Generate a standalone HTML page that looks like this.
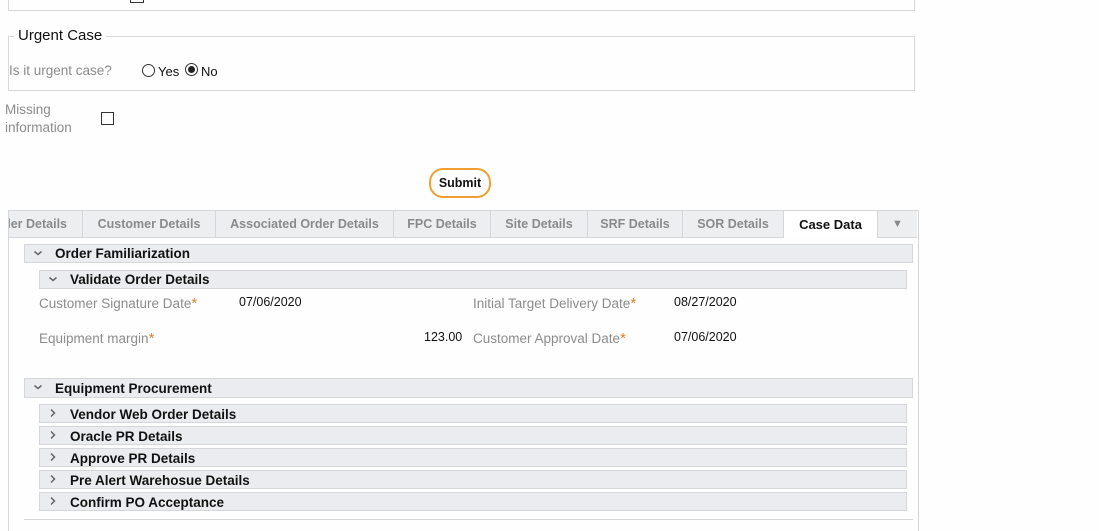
<!DOCTYPE html>
<html><head><style>
body{margin:0;width:1099px;height:521px;background:#fefefe;font-family:"Liberation Sans",sans-serif;position:relative;overflow:hidden;font-size:13px;color:#111}
.a{position:absolute;white-space:nowrap}
.hdr{position:absolute;background:#eaecef;border:1px solid #d4d6d9;font-weight:bold;font-size:13.5px;line-height:17px;box-sizing:border-box;color:#111}
.hdr svg{position:absolute;left:8px;top:4px}
.hdr span{position:absolute;left:30px;top:0;white-space:nowrap}
.lbl{position:absolute;color:#8c8c8c;font-size:13.5px;white-space:nowrap}
.st{color:#d9822b;font-size:15px}
.tab{position:absolute;top:211px;height:27px;line-height:27px;text-align:center;font-weight:bold;color:#8a8a8a;font-size:12.5px;background:#eceef0;border-right:1px solid #d4d6d9;box-sizing:border-box;white-space:nowrap;overflow:hidden}
</style></head><body>
<div class="a" style="left:8px;top:-2px;width:905px;height:12px;border:1px solid #d8d8d8;border-top:none"></div>
<div class="a" style="left:130px;top:-4px;width:12px;height:5px;border:1px solid #333"></div>
<div class="a" style="left:8px;top:36px;width:905px;height:53px;border:1px solid #d8d8d8"></div>
<div class="a" style="left:14px;top:27px;background:#fefefe;padding:0 4px;font-size:15px;color:#111">Urgent Case</div>
<div class="lbl" style="left:9px;top:63px">Is it urgent case?</div>
<div class="a" style="left:142px;top:64px;width:11px;height:11px;border:1px solid #333;border-radius:50%"></div>
<div class="a" style="left:158px;top:64px;font-size:13px">Yes</div>
<div class="a" style="left:185px;top:63px;width:11px;height:11px;border:1px solid #333;border-radius:50%"></div>
<div class="a" style="left:188px;top:66px;width:7px;height:7px;background:#222;border-radius:50%"></div>
<div class="a" style="left:201px;top:64px;font-size:13px">No</div>
<div class="lbl" style="left:5px;top:101px;line-height:18px">Missing<br>information</div>
<div class="a" style="left:101px;top:112px;width:11px;height:11px;border:1px solid #333"></div>
<div class="a" style="left:429px;top:168px;width:58px;height:26px;border:2px solid #f0a030;border-radius:14px;text-align:center;line-height:26px;font-weight:bold;font-size:12.5px">Submit</div>

<div class="a" style="left:8px;top:210px;width:909px;height:320px;border:1px solid #d4d6d9;border-bottom:none"></div>
<div class="tab" style="left:9px;width:74px;text-align:right;padding-right:15px;direction:rtl">ler Details</div>
<div class="tab" style="left:83px;width:133px">Customer Details</div>
<div class="tab" style="left:216px;width:178px">Associated Order Details</div>
<div class="tab" style="left:394px;width:97px">FPC Details</div>
<div class="tab" style="left:491px;width:97px">Site Details</div>
<div class="tab" style="left:588px;width:95px">SRF Details</div>
<div class="tab" style="left:683px;width:101px">SOR Details</div>
<div class="tab" style="left:784px;width:94px;background:#fff;color:#111;font-size:13px">Case Data</div>
<div class="tab" style="left:878px;width:39px;border-right:none;color:#888;font-size:11px">▼</div>
<div class="a" style="left:8px;top:237px;width:776px;height:1px;background:#d4d6d9"></div>
<div class="a" style="left:878px;top:237px;width:39px;height:1px;background:#d4d6d9"></div>

<div class="hdr" style="left:24px;top:244px;width:889px;height:19px"><svg width="10" height="8"><path d="M1.5 2.5L5 5.5L8.5 2.5" fill="none" stroke="#666" stroke-width="1.5"/></svg><span>Order Familiarization</span></div>
<div class="hdr" style="left:39px;top:270px;width:868px;height:19px"><svg width="10" height="8"><path d="M1.5 2.5L5 5.5L8.5 2.5" fill="none" stroke="#666" stroke-width="1.5"/></svg><span>Validate Order Details</span></div>
<div class="lbl" style="left:39px;top:295px">Customer Signature Date<span class="st">*</span></div>
<div class="a" style="left:239px;top:295px;font-size:12.5px">07/06/2020</div>
<div class="lbl" style="left:473px;top:295px">Initial Target Delivery Date<span class="st">*</span></div>
<div class="a" style="left:674px;top:295px;font-size:12.5px">08/27/2020</div>
<div class="lbl" style="left:39px;top:330px">Equipment margin<span class="st">*</span></div>
<div class="a" style="left:424px;top:330px;font-size:12.5px">123.00</div>
<div class="lbl" style="left:473px;top:330px">Customer Approval Date<span class="st">*</span></div>
<div class="a" style="left:674px;top:330px;font-size:12.5px">07/06/2020</div>

<div class="hdr" style="left:24px;top:378px;width:889px;height:20px"><svg width="10" height="8"><path d="M1.5 2.5L5 5.5L8.5 2.5" fill="none" stroke="#666" stroke-width="1.5"/></svg><span style="top:1px">Equipment Procurement</span></div>
<div class="hdr" style="left:39px;top:404px;width:868px;height:19px"><svg width="10" height="10" style="top:3px"><path d="M3 1.5L6.5 5L3 8.5" fill="none" stroke="#666" stroke-width="1.5"/></svg><span style="top:1px">Vendor Web Order Details</span></div>
<div class="hdr" style="left:39px;top:426px;width:868px;height:19px"><svg width="10" height="10" style="top:3px"><path d="M3 1.5L6.5 5L3 8.5" fill="none" stroke="#666" stroke-width="1.5"/></svg><span style="top:1px">Oracle PR Details</span></div>
<div class="hdr" style="left:39px;top:448px;width:868px;height:19px"><svg width="10" height="10" style="top:3px"><path d="M3 1.5L6.5 5L3 8.5" fill="none" stroke="#666" stroke-width="1.5"/></svg><span style="top:1px">Approve PR Details</span></div>
<div class="hdr" style="left:39px;top:470px;width:868px;height:19px"><svg width="10" height="10" style="top:3px"><path d="M3 1.5L6.5 5L3 8.5" fill="none" stroke="#666" stroke-width="1.5"/></svg><span style="top:1px">Pre Alert Warehosue Details</span></div>
<div class="hdr" style="left:39px;top:492px;width:868px;height:19px"><svg width="10" height="10" style="top:3px"><path d="M3 1.5L6.5 5L3 8.5" fill="none" stroke="#666" stroke-width="1.5"/></svg><span style="top:1px">Confirm PO Acceptance</span></div>
<div class="a" style="left:24px;top:519px;width:889px;height:1px;background:#d4d6d9"></div>
</body></html>
